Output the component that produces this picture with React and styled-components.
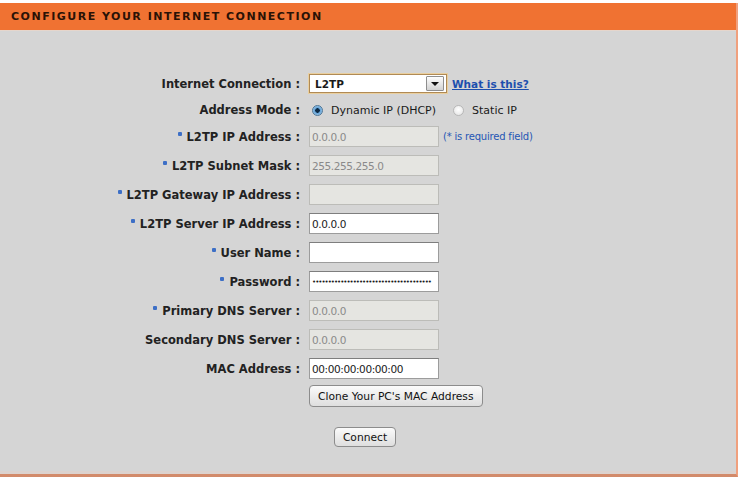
import React from "react";
import styled, { createGlobalStyle } from "styled-components";

const GlobalStyle = createGlobalStyle`
  body {
    margin: 0;
    background: #ffffff;
    font-family: "DejaVu Sans", Verdana, sans-serif;
  }
`;

const fields = [
  { label: "L2TP IP Address", value: "0.0.0.0", required: true, disabled: true, note: "(* is required field)" },
  { label: "L2TP Subnet Mask", value: "255.255.255.0", required: true, disabled: true },
  { label: "L2TP Gateway IP Address", value: "", required: true, disabled: true },
  { label: "L2TP Server IP Address", value: "0.0.0.0", required: true },
  { label: "User Name", value: "", required: true },
  { label: "Password", value: "x".repeat(38), required: true, password: true },
  { label: "Primary DNS Server", value: "0.0.0.0", required: true, disabled: true },
  { label: "Secondary DNS Server", value: "0.0.0.0", disabled: true },
  { label: "MAC Address", value: "00:00:00:00:00:00" },
];

const App = () => {
  return (
    <>
      <GlobalStyle />
      <Panel>
        <Header>Configure your Internet Connection</Header>
        <Form>
          <Row>
            <Label>Internet Connection :</Label>
            <FieldCell>
              <SelectBox>
                <Select defaultValue="l2tp">
                  <option value="l2tp">L2TP</option>
                  <option value="pppoe">PPPoE</option>
                  <option value="static">Static IP</option>
                </Select>
                <ArrowButton />
              </SelectBox>
              <HelpLink href="#">What is this?</HelpLink>
            </FieldCell>
          </Row>

          <Row $height={16}>
            <Label>Address Mode :</Label>
            <FieldCell>
              <RadioLabel>
                <Radio type="radio" name="mode" defaultChecked />
                Dynamic IP (DHCP)
              </RadioLabel>
              <RadioLabel>
                <Radio type="radio" name="mode" />
                Static IP
              </RadioLabel>
            </FieldCell>
          </Row>

          {fields.map((f) => (
            <Row key={f.label}>
              <Label>
                {f.required && <Bullet />}
                {f.label} :
              </Label>
              <FieldCell>
                {f.password ? (
                  <PasswordInput type="password" defaultValue={f.value} />
                ) : (
                  <TextInput
                    type="text"
                    defaultValue={f.value}
                    disabled={f.disabled}
                  />
                )}
                {f.note && <Note>{f.note}</Note>}
              </FieldCell>
            </Row>
          ))}

          <ActionRow>
            <span />
            <FieldCell>
              <Button type="button">Clone Your PC's MAC Address</Button>
            </FieldCell>
          </ActionRow>

          <SubmitRow>
            <Button type="button" $small>
              Connect
            </Button>
          </SubmitRow>
        </Form>
      </Panel>
    </>
  );
};

export default App;

const Panel = styled.div`
  margin-top: 3px;
  width: 736px;
  background: #d5d5d5;
  border-right: 2px solid #f0a07e;
  border-bottom: 3px solid #d28a6a;
  box-shadow: inset 0 -3px 0 #dcd2ce;
`;

const Header = styled.div`
  height: 27px;
  line-height: 27px;
  padding-left: 11px;
  background: #f07232;
  border-bottom: 1px solid #e6d6cc;
  color: #2a1206;
  font-family: "DejaVu Sans", Verdana, sans-serif;
  font-weight: bold;
  font-size: 11px;
  letter-spacing: 1.5px;
  text-transform: uppercase;
`;

const Form = styled.div`
  display: flex;
  flex-direction: column;
  gap: 8px;
  padding: 42px 0 27px;
`;

const Row = styled.div`
  display: grid;
  grid-template-columns: 300px auto;
  column-gap: 9px;
  align-items: center;
  height: ${(p) => p.$height || 21}px;
`;

const ActionRow = styled(Row)`
  height: 22px;
  margin-top: -2px;
`;

const SubmitRow = styled.div`
  display: flex;
  justify-content: center;
  padding-right: 6px;
  margin-top: 12px;
`;

const Label = styled.div`
  text-align: right;
  white-space: nowrap;
  font-weight: bold;
  font-size: 11.5px;
  color: #222222;
`;

const Bullet = styled.span`
  display: inline-block;
  width: 4px;
  height: 4px;
  margin-right: 5px;
  vertical-align: 5px;
  border-radius: 1px;
  background: #3d6fc6;
`;

const FieldCell = styled.div`
  display: flex;
  align-items: center;
  gap: 5px;
`;

const SelectBox = styled.div`
  display: flex;
  align-items: center;
  width: 134px;
  height: 15px;
  padding: 1px 2px 1px 0;
  background: #ffffff;
  border: 1px solid #b08a55;
  box-shadow: 0 0 0 1px #e9cf9f;
`;

const Select = styled.select`
  flex: 1;
  min-width: 0;
  height: 15px;
  padding: 0 0 0 5px;
  border: none;
  outline: none;
  background: transparent;
  appearance: none;
  font-family: "DejaVu Sans", Verdana, sans-serif;
  font-size: 10.5px;
  font-weight: bold;
  color: #1a1a1a;
`;

const ArrowButton = styled.span`
  position: relative;
  width: 18px;
  height: 15px;
  box-sizing: border-box;
  border: 1px solid #8e8e8e;
  border-radius: 1px;
  background: linear-gradient(#fdfdfd, #d2d2d2);

  &::after {
    content: "";
    position: absolute;
    left: 4px;
    top: 5px;
    border-left: 4px solid transparent;
    border-right: 4px solid transparent;
    border-top: 4px solid #111111;
  }
`;

const HelpLink = styled.a`
  font-size: 10.5px;
  font-weight: bold;
  color: #1d4fae;
  text-decoration: underline;
`;

const RadioLabel = styled.label`
  display: flex;
  align-items: center;
  gap: 8px;
  margin-right: 9px;
  font-size: 11px;
  color: #1a1a1a;
`;

const Radio = styled.input`
  appearance: none;
  margin: 0 0 0 3px;
  width: 11px;
  height: 11px;
  border-radius: 50%;
  border: 1px solid #b8b8b8;
  background: radial-gradient(circle at 50% 40%, #ffffff, #e2e2e2);

  &:checked {
    border-color: #4d7596;
    background: radial-gradient(circle, #0e2a44 0 2px, #5f9fd4 2.5px, #bcdcf4 100%);
  }
`;

const TextInput = styled.input`
  box-sizing: border-box;
  width: 130px;
  height: 21px;
  padding: 0 2px;
  margin: 0;
  border: 1px solid #9c9c9c;
  border-top-color: #7e7e7e;
  background: #ffffff;
  outline: none;
  font-family: "DejaVu Sans", Verdana, sans-serif;
  font-size: 10.5px;
  letter-spacing: -0.4px;
  color: #1a1a1a;

  &:disabled {
    background: #e5e5e1;
    border-color: #bcbcb8;
    color: #8a8a8a;
    -webkit-text-fill-color: #8a8a8a;
  }
`;

const PasswordInput = styled(TextInput)`
  font-size: 7px;
  letter-spacing: -1px;
`;

const Note = styled.span`
  margin-left: -1px;
  font-size: 10px;
  letter-spacing: -0.2px;
  color: #2656b4;
`;

const Button = styled.button`
  height: ${(p) => (p.$small ? 20 : 22)}px;
  padding: 0 8px;
  border: 1px solid #8c8c8c;
  border-radius: 4px;
  background: linear-gradient(#fbfbfb, #dedede);
  font-family: "DejaVu Sans", Verdana, sans-serif;
  font-size: 10.7px;
  color: #111111;
  cursor: pointer;
`;
